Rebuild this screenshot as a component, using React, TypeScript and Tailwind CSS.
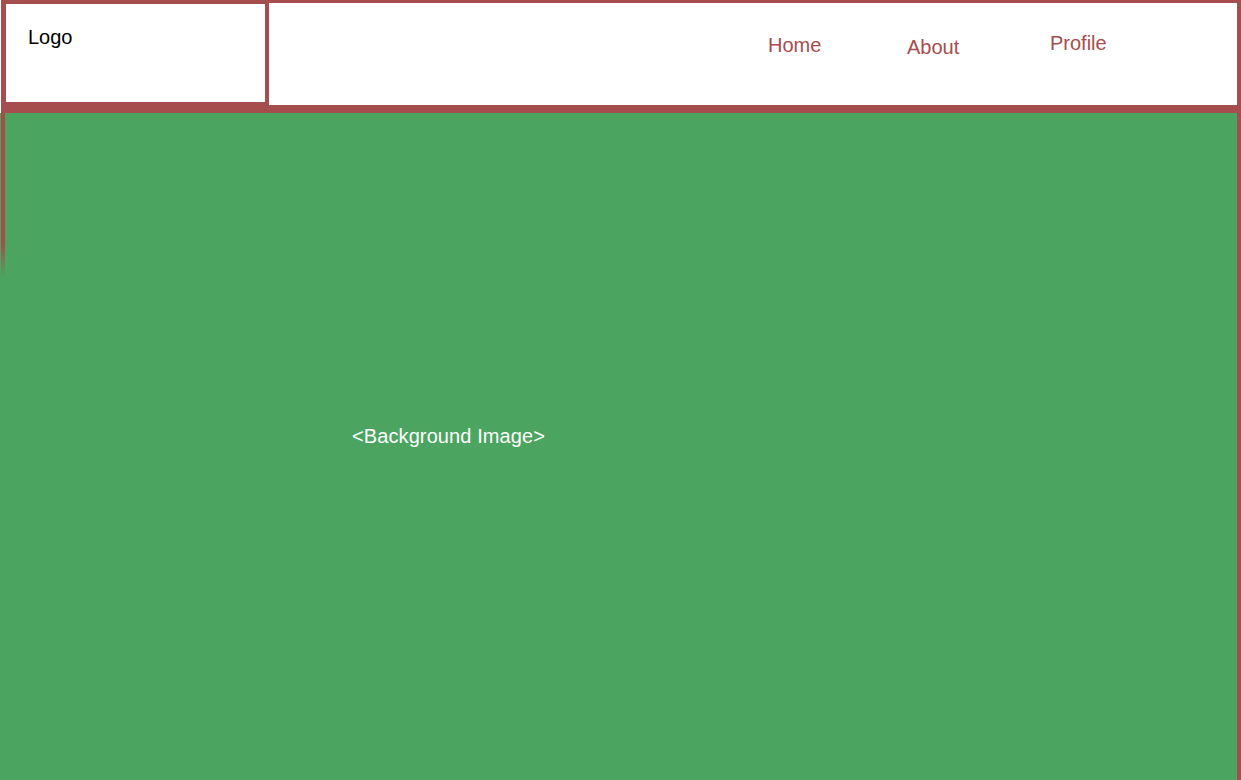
import React from "react";

export default function App() {
  return (
    <div className="w-[1241px] h-[780px] bg-white flex flex-col overflow-hidden font-['Liberation_Sans',Arial,sans-serif] text-[20px] leading-[23px]">
      {/* Header */}
      <div className="h-[113px] ml-[1px] flex bg-[#a64d4d] shrink-0">
        <div className="mt-[4px] ml-[5px] w-[259px] h-[98px] bg-white pl-[22px] pt-[22px] text-black">
          Logo
        </div>
        <nav className="mt-[3px] ml-[4px] mr-[4px] h-[102px] flex-1 bg-white flex items-start pl-[499px] text-[#a64d4d]">
          <span className="w-[139px] mt-[31px]">Home</span>
          <span className="w-[143px] mt-[33px]">About</span>
          <span className="mt-[29px]">Profile</span>
        </nav>
      </div>
      {/* Hero */}
      <div className="flex-1 flex bg-[#4ba45f] pl-[1px]">
        <div className="w-[4px] bg-[linear-gradient(to_bottom,#a64d4d_130px,#4ba45f_164px)]" />
        <div className="flex-1 pl-[347px] pt-[312px] text-white tracking-[0.1px]">&lt;Background Image&gt;</div>
        <div className="w-[4px] bg-[#a64d4d]" />
      </div>
    </div>
  );
}
